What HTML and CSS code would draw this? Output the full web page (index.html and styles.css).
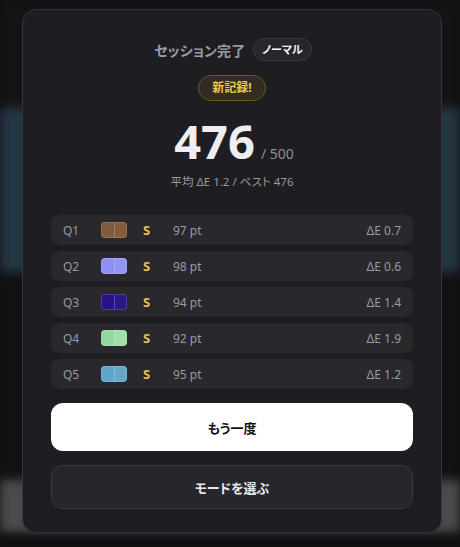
FILE: index.html
```html
<!DOCTYPE html>
<html lang="ja">
<head>
  <meta charset="utf-8">
  <title>セッション完了</title>
  <link rel="stylesheet" href="styles.css">
</head>
<body>
  <div class="page" aria-hidden="true">
    <div class="page-top"></div>
    <div class="page-band"></div>
    <div class="page-mid"></div>
    <div class="page-bar"></div>
    <div class="page-foot"></div>
  </div>

  <div class="overlay">
    <div class="result" role="dialog" aria-label="セッション完了">
      <header class="result-head">
        <h2>セッション完了</h2>
        <span class="mode">ノーマル</span>
      </header>
      <div class="record">新記録!</div>
      <div class="score">
        <span class="score-num">476</span>
        <span class="score-max">/ 500</span>
      </div>
      <p class="summary">平均 ΔE 1.2 / ベスト 476</p>

      <ul class="rounds">
        <li class="round">
          <span class="q">Q1</span>
          <span class="swatch"><i style="background:#7f5a3c"></i><i style="background:#835c3b"></i></span>
          <span class="rank">S</span>
          <span class="pt">97 pt</span>
          <span class="de">ΔE 0.7</span>
        </li>
        <li class="round">
          <span class="q">Q2</span>
          <span class="swatch"><i style="background:#8d8ff2"></i><i style="background:#9195f3"></i></span>
          <span class="rank">S</span>
          <span class="pt">98 pt</span>
          <span class="de">ΔE 0.6</span>
        </li>
        <li class="round">
          <span class="q">Q3</span>
          <span class="swatch"><i style="background:#2c0f8a"></i><i style="background:#2c1784"></i></span>
          <span class="rank">S</span>
          <span class="pt">94 pt</span>
          <span class="de">ΔE 1.4</span>
        </li>
        <li class="round">
          <span class="q">Q4</span>
          <span class="swatch"><i style="background:#94d6a0"></i><i style="background:#9fe0a8"></i></span>
          <span class="rank">S</span>
          <span class="pt">92 pt</span>
          <span class="de">ΔE 1.9</span>
        </li>
        <li class="round">
          <span class="q">Q5</span>
          <span class="swatch"><i style="background:#5fa6cc"></i><i style="background:#66a8ca"></i></span>
          <span class="rank">S</span>
          <span class="pt">95 pt</span>
          <span class="de">ΔE 1.2</span>
        </li>
      </ul>

      <button class="btn btn-primary">もう一度</button>
      <button class="btn btn-ghost">モードを選ぶ</button>
    </div>
  </div>
</body>
</html>
```

FILE: styles.css
```css
* { box-sizing: border-box; }

html, body {
  margin: 0;
  height: 100%;
}

body {
  background: #111114;
  font-family: "Noto Sans", "Noto Sans CJK JP", sans-serif;
  font-feature-settings: "palt";
  overflow: hidden;
}

/* blurred page behind the dialog */
.page {
  filter: blur(5px);
  height: 547px;
}
.page-top { height: 108px; background: #141417; }
.page-band { height: 164px; background: #243543; }
.page-mid { height: 208px; background: #111114; }
.page-bar { height: 52px; background: #4b4b4d; }
.page-foot { height: 15px; background: #0e0e10; }

.overlay {
  position: fixed;
  inset: 0;
  padding: 9px 18px 0 22px;
}

.result {
  width: 420px;
  background: #1e1e22;
  border: 1px solid #34343a;
  border-radius: 14px;
  padding: 28px 28px 23px;
  display: flex;
  flex-direction: column;
  align-items: center;
}

.result-head {
  display: flex;
  align-items: center;
  gap: 8px;
  height: 23px;
  padding-left: 2px;
}
.result-head h2 {
  margin: 0;
  font-size: 14px;
  font-weight: 700;
  color: #9b9ba2;
  letter-spacing: 0.1px;
}
.mode {
  border: 1px solid #3a3a41;
  background: #26262b;
  color: #f2f2f5;
  font-size: 11px;
  font-weight: 700;
  border-radius: 12px;
  padding: 2px 8px;
  line-height: 17px;
}

.record {
  margin-top: 14px;
  height: 26px;
  padding: 0 13px;
  border: 1px solid #6a5629;
  background: #332c22;
  color: #f2c14e;
  font-size: 12px;
  font-weight: 700;
  border-radius: 13px;
  line-height: 24px;
}

.score {
  margin-top: 12px;
  display: flex;
  align-items: baseline;
  gap: 6px;
  padding-left: 4px;
}
.score-num {
  font-size: 47px;
  font-weight: 700;
  color: #efeff3;
  line-height: 56px;
}
.score-max {
  font-size: 14px;
  color: #8e8e95;
}

.summary {
  margin: 7px 0 0;
  font-size: 11.5px;
  line-height: 12px;
  color: #9a9aa1;
}

.rounds {
  list-style: none;
  margin: 27px 0 0;
  padding: 0;
  width: 100%;
  display: flex;
  flex-direction: column;
  gap: 6px;
}
.round {
  height: 30px;
  background: #28282d;
  border-radius: 9px;
  display: flex;
  align-items: center;
  padding: 0 12px;
  font-size: 12px;
  color: #9a9aa1;
}
.q { width: 38px; }
.swatch {
  display: flex;
  width: 26px;
  height: 16px;
}
.swatch i {
  flex: 1;
  border: 1px solid rgba(255, 255, 255, 0.16);
  border-radius: 4px 0 0 4px;
}
.swatch i + i {
  border-radius: 0 4px 4px 0;
  border-left: 1px solid rgba(255, 255, 255, 0.22);
  margin-left: -1px;
}
.rank {
  margin-left: 16px;
  width: 30px;
  color: #f2c14e;
  font-weight: 700;
  font-size: 13px;
}
.pt { flex: 1; }
.de { text-align: right; }

.btn {
  width: 100%;
  border-radius: 12px;
  font-family: inherit;
  font-feature-settings: "palt";
  font-size: 13px;
  font-weight: 700;
  cursor: pointer;
}
.btn-primary {
  margin-top: 14px;
  height: 48px;
  background: #ffffff;
  color: #111114;
  border: none;
}
.btn-ghost {
  margin-top: 14px;
  height: 44px;
  background: #26262b;
  color: #e8e8ec;
  border: 1px solid #3a3a41;
}
```
